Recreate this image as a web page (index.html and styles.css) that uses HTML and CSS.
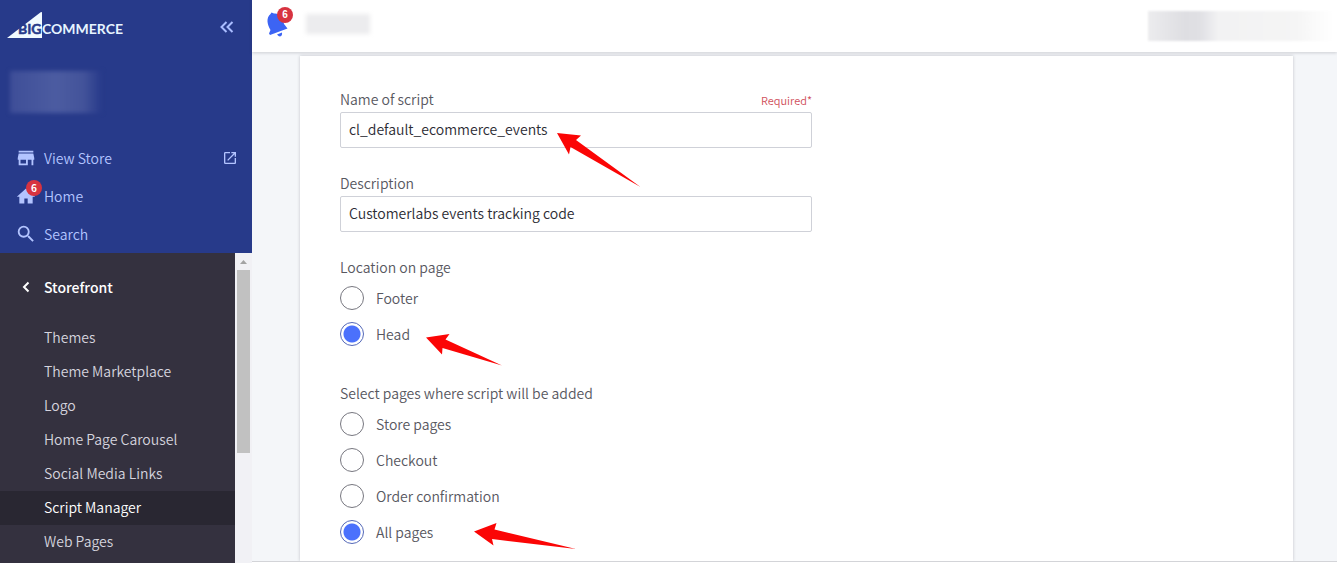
FILE: index.html
```html
<!DOCTYPE html>
<html lang="en">
<head>
<meta charset="utf-8">
<title>Script Manager</title>
<link rel="stylesheet" href="styles.css">
</head>
<body>
<div class="app">
  <aside class="sidebar">
    <div class="side-top">
      <div class="brand-row">
        <svg class="logo" viewBox="0 0 120 30" role="img" aria-label="BigCommerce">
          <path class="logo-sail" d="M0 29L34 3Q35 2.500 35 4V29Z"/>
          <text class="logo-big" x="11" y="25">BIG</text>
          <text class="logo-rest" x="35" y="25">COMMERCE</text>
        </svg>
        <button class="collapse" type="button" aria-label="Collapse menu">
          <svg width="14" height="12" viewBox="0 0 14 12"><path d="M6.500 1L1.500 6l5 5M12.500 1l-5 5 5 5"/></svg>
        </button>
      </div>
      <div class="store-name"></div>
      <nav class="primary">
        <a class="primary-link" href="#">
          <span class="icon-box"><svg width="22" height="22" viewBox="0 0 24 24"><path d="M20 4H4v2h16V4zm1 10v-2l-1-5H4l-1 5v2h1v6h10v-6h4v6h2v-6h1zm-9 4H6v-4h6v4z"/></svg></span>
          <span class="primary-text">View Store</span>
          <svg width="16" height="16" viewBox="0 0 24 24"><path d="M19 19H5V5h7V3H5a2 2 0 0 0-2 2v14a2 2 0 0 0 2 2h14c1.100 0 2-.9 2-2v-7h-2v7zM14 3v2h3.590l-9.830 9.830 1.410 1.410L19 6.410V10h2V3h-7z"/></svg>
        </a>
        <a class="primary-link" href="#">
          <span class="icon-box"><svg width="20" height="20" viewBox="0 0 24 24"><path d="M10 21v-6h4v6h6v-8h3L12 3 1 13h3v8z"/></svg><span class="badge badge-home">6</span></span>
          <span class="primary-text">Home</span>
        </a>
        <a class="primary-link" href="#">
          <span class="icon-box"><svg width="22" height="22" viewBox="0 0 24 24"><path d="M15.500 14h-.790l-.280-.270A6.470 6.470 0 0 0 16 9.500 6.500 6.500 0 1 0 9.500 16c1.610 0 3.090-.590 4.230-1.570l.270.280v.790l5 4.990L20.490 19l-4.990-5zm-6 0C7.010 14 5 11.990 5 9.500S7.010 5 9.500 5 14 7.010 14 9.500 11.990 14 9.500 14z"/></svg></span>
          <span class="primary-text">Search</span>
        </a>
      </nav>
    </div>
    <div class="side-body">
      <nav class="submenu">
        <a class="submenu-title" href="#">
          <svg class="back" width="8" height="12" viewBox="0 0 8 12"><path d="M6.500 1.500L2 6l4.500 4.500"/></svg>
          <span>Storefront</span>
        </a>
        <a class="sub-link" href="#">Themes</a>
        <a class="sub-link" href="#">Theme Marketplace</a>
        <a class="sub-link" href="#">Logo</a>
        <a class="sub-link" href="#">Home Page Carousel</a>
        <a class="sub-link" href="#">Social Media Links</a>
        <a class="sub-link active" href="#">Script Manager</a>
        <a class="sub-link" href="#">Web Pages</a>
      </nav>
      <div class="scrollbar">
        <svg class="scroll-up" width="17" height="17" viewBox="0 0 17 17"><path d="M5 11l3.500-4 3.500 4z"/></svg>
        <div class="thumb"></div>
      </div>
    </div>
  </aside>
  <div class="page">
    <header class="topbar">
      <button class="bell" type="button" aria-label="Notifications">
        <svg width="24" height="28" viewBox="0 0 24 28"><path d="M4.500 4L5.500 2.500 8 3.500C14 3 17 7 18 14L21.500 18.500 4 25 3 23.500 4.500 20C1 14 0 8 4.500 4Z"/><path d="M11 24.500L16 22.500Q16.500 26 14 26.500 12.500 26.500 11 24.500Z"/></svg>
        <span class="badge badge-bell">6</span>
      </button>
      <div class="crumb"></div>
      <div class="account"></div>
    </header>
    <main class="content">
      <form class="card">
        <div class="field">
          <div class="label-row"><label for="name">Name of script</label><span class="required">Required*</span></div>
          <input id="name" type="text" value="cl_default_ecommerce_events">
          <svg class="arrow arrow-name" width="84" height="55" viewBox="0 0 84 55"><path d="M0 0L24 2.500 19 7 83.500 54 13.500 14 12 21.500Z"/></svg>
        </div>
        <div class="field">
          <div class="label-row"><label for="desc">Description</label></div>
          <input id="desc" type="text" value="Customerlabs events tracking code">
        </div>
        <fieldset class="group">
          <legend>Location on page</legend>
          <label class="option"><input type="radio" name="location">Footer</label>
          <label class="option"><input type="radio" name="location" checked>Head
            <svg class="arrow arrow-head" width="76" height="32" viewBox="0 0 76 32"><path d="M0 3.500L23.500 0 19.500 5.500 76 31.500 16.500 14 16 20.500Z"/></svg>
          </label>
        </fieldset>
        <fieldset class="group">
          <legend>Select pages where script will be added</legend>
          <label class="option"><input type="radio" name="pages">Store pages</label>
          <label class="option"><input type="radio" name="pages">Checkout</label>
          <label class="option"><input type="radio" name="pages">Order confirmation</label>
          <label class="option"><input type="radio" name="pages" checked>All pages
            <svg class="arrow arrow-all" width="102" height="28" viewBox="0 0 102 28"><path d="M0 8.500L22.500 0 20.500 6.500 102 26 18 16 19.500 22.500Z"/></svg>
          </label>
        </fieldset>
      </form>
    </main>
    <footer class="footer"></footer>
  </div>
</div>
</body>
</html>
```
FILE: styles.css
```css
* { box-sizing: border-box; }
body {
  margin: 0;
  font-family: "Noto Sans CJK SC", "Open Sans", sans-serif;
  font-size: 14px;
  font-weight: 350;
  line-height: 22px;
  color: #58585f;
}
a { text-decoration: none; color: inherit; }
button { border: 0; padding: 0; background: none; }
svg { display: block; }

.app { display: flex; height: 100vh; overflow: hidden; }
.sidebar { display: flex; flex-direction: column; flex: none; width: 252px; }

.side-top { flex: none; background: #273a8a; color: #b3c4ff; padding-bottom: 1px; }
.side-top a svg { fill: currentColor; }
.brand-row { display: flex; align-items: center; justify-content: space-between; height: 54px; padding: 0 18px 6px 7px; }
.logo { width: 120px; height: 30px; }
.logo-sail { fill: #f1faff; }
.logo text { font-family: Lato, sans-serif; font-size: 14px; font-weight: 700; }
.logo-big { fill: #273a8a; stroke: #273a8a; stroke-width: 0.5; }
.logo-rest { fill: #e6f4ff; }
.collapse { padding-top: 6px; }
.collapse svg { fill: none; stroke: #a9bcff; stroke-width: 2; }
.store-name { width: 92px; height: 42px; margin: 17px 0 26px 10px; background: linear-gradient(90deg, #3e4e98, #4c5ca1 50%, #43539a 80%, #273a8a); filter: blur(2px); }

.primary-link { display: flex; align-items: center; height: 38px; padding: 0 14px 0 16px; }
.primary-link:last-child { height: 37px; }
.icon-box { position: relative; display: flex; align-items: center; justify-content: center; width: 20px; margin-right: 8px; }
.icon-box svg { flex: none; }
.primary-text { flex: 1; }
.badge { position: absolute; width: 16px; height: 16px; border-radius: 50%; background: #d73340; color: #fff; font-size: 10px; font-weight: 700; line-height: 16px; text-align: center; }
.badge-home { left: 10px; top: -6px; }

.side-body { display: flex; flex: 1; min-height: 0; }
.submenu { flex: 1; background: #34313f; color: #d5d4de; overflow: hidden; }
.submenu-title { display: flex; align-items: center; height: 68px; padding-left: 22px; color: #fff; font-weight: 500; }
.back { fill: none; stroke: #fff; stroke-width: 2; margin-right: 14px; }
.sub-link { display: block; padding: 5px 0 7px 44px; }
.sub-link.active { background: #292732; color: #fff; }
.scrollbar { width: 17px; background: #f1f1f5; }
.scroll-up { fill: #a3a3a3; }
.thumb { height: 59%; margin: 0 2px; background: #c1c1c1; }

.page { display: flex; flex-direction: column; flex: 1; min-width: 0; background: #f4f6f9; }
.topbar { position: relative; z-index: 1; display: flex; align-items: center; flex: none; height: 52px; padding: 0 4px 4px 14px; background: #fff; box-shadow: 0 1px 3px rgba(49, 52, 64, 0.2); }
.bell { position: relative; margin-right: 16px; }
.bell svg { fill: #3c64f4; }
.badge-bell { left: 11px; top: -3px; }
.crumb { width: 64px; height: 20px; background: #ececee; filter: blur(2px); }
.account { width: 185px; height: 30px; margin-left: auto; margin-top: 4px; background: linear-gradient(90deg, #ececee, #dedee2 20%, #e0e0e4 28%, #f2f2f3 38%, #f5f5f5 80%, #fff); filter: blur(1px); }

.content { flex: 1; min-height: 0; padding: 4px 44px 0 48px; overflow: hidden; }
.card { min-height: 100%; padding: 32px 40px 0; background: #fff; box-shadow: 0 0 3px rgba(49, 52, 64, 0.25); }
.field { position: relative; width: 472px; max-width: 100%; margin-bottom: 24px; }
.label-row { display: flex; justify-content: space-between; height: 24px; }
.required { font-size: 11px; line-height: 24px; color: #d0505c; }
input[type="text"] { display: block; width: 100%; height: 36px; padding: 0 8px 2px; border: 1px solid #cfd1d8; border-radius: 2px; background: #fff; color: #2b2b33; font: inherit; }
.group { min-width: 0; margin: 0 0 30px; padding: 0; border: 0; }
legend { height: 24px; padding: 0; }
.option { position: relative; display: flex; align-items: center; width: max-content; height: 36px; }
input[type="radio"] { appearance: none; width: 24px; height: 24px; margin: 0 12px 0 0; border: 1px solid #77777f; border-radius: 50%; background: #fff; }
input[type="radio"]:checked { border-color: #5468b8; background: radial-gradient(circle, #4b71fc 8px, #fff 9px); }
.arrow { position: absolute; fill: #fb0505; }
.arrow-name { left: 217px; top: 45px; }
.arrow-head { left: 86px; top: 18px; }
.arrow-all { left: 134px; top: 9px; }
.footer { flex: none; height: 2px; border-top: 1px solid #d3d4d8; background: #fff; }
```
